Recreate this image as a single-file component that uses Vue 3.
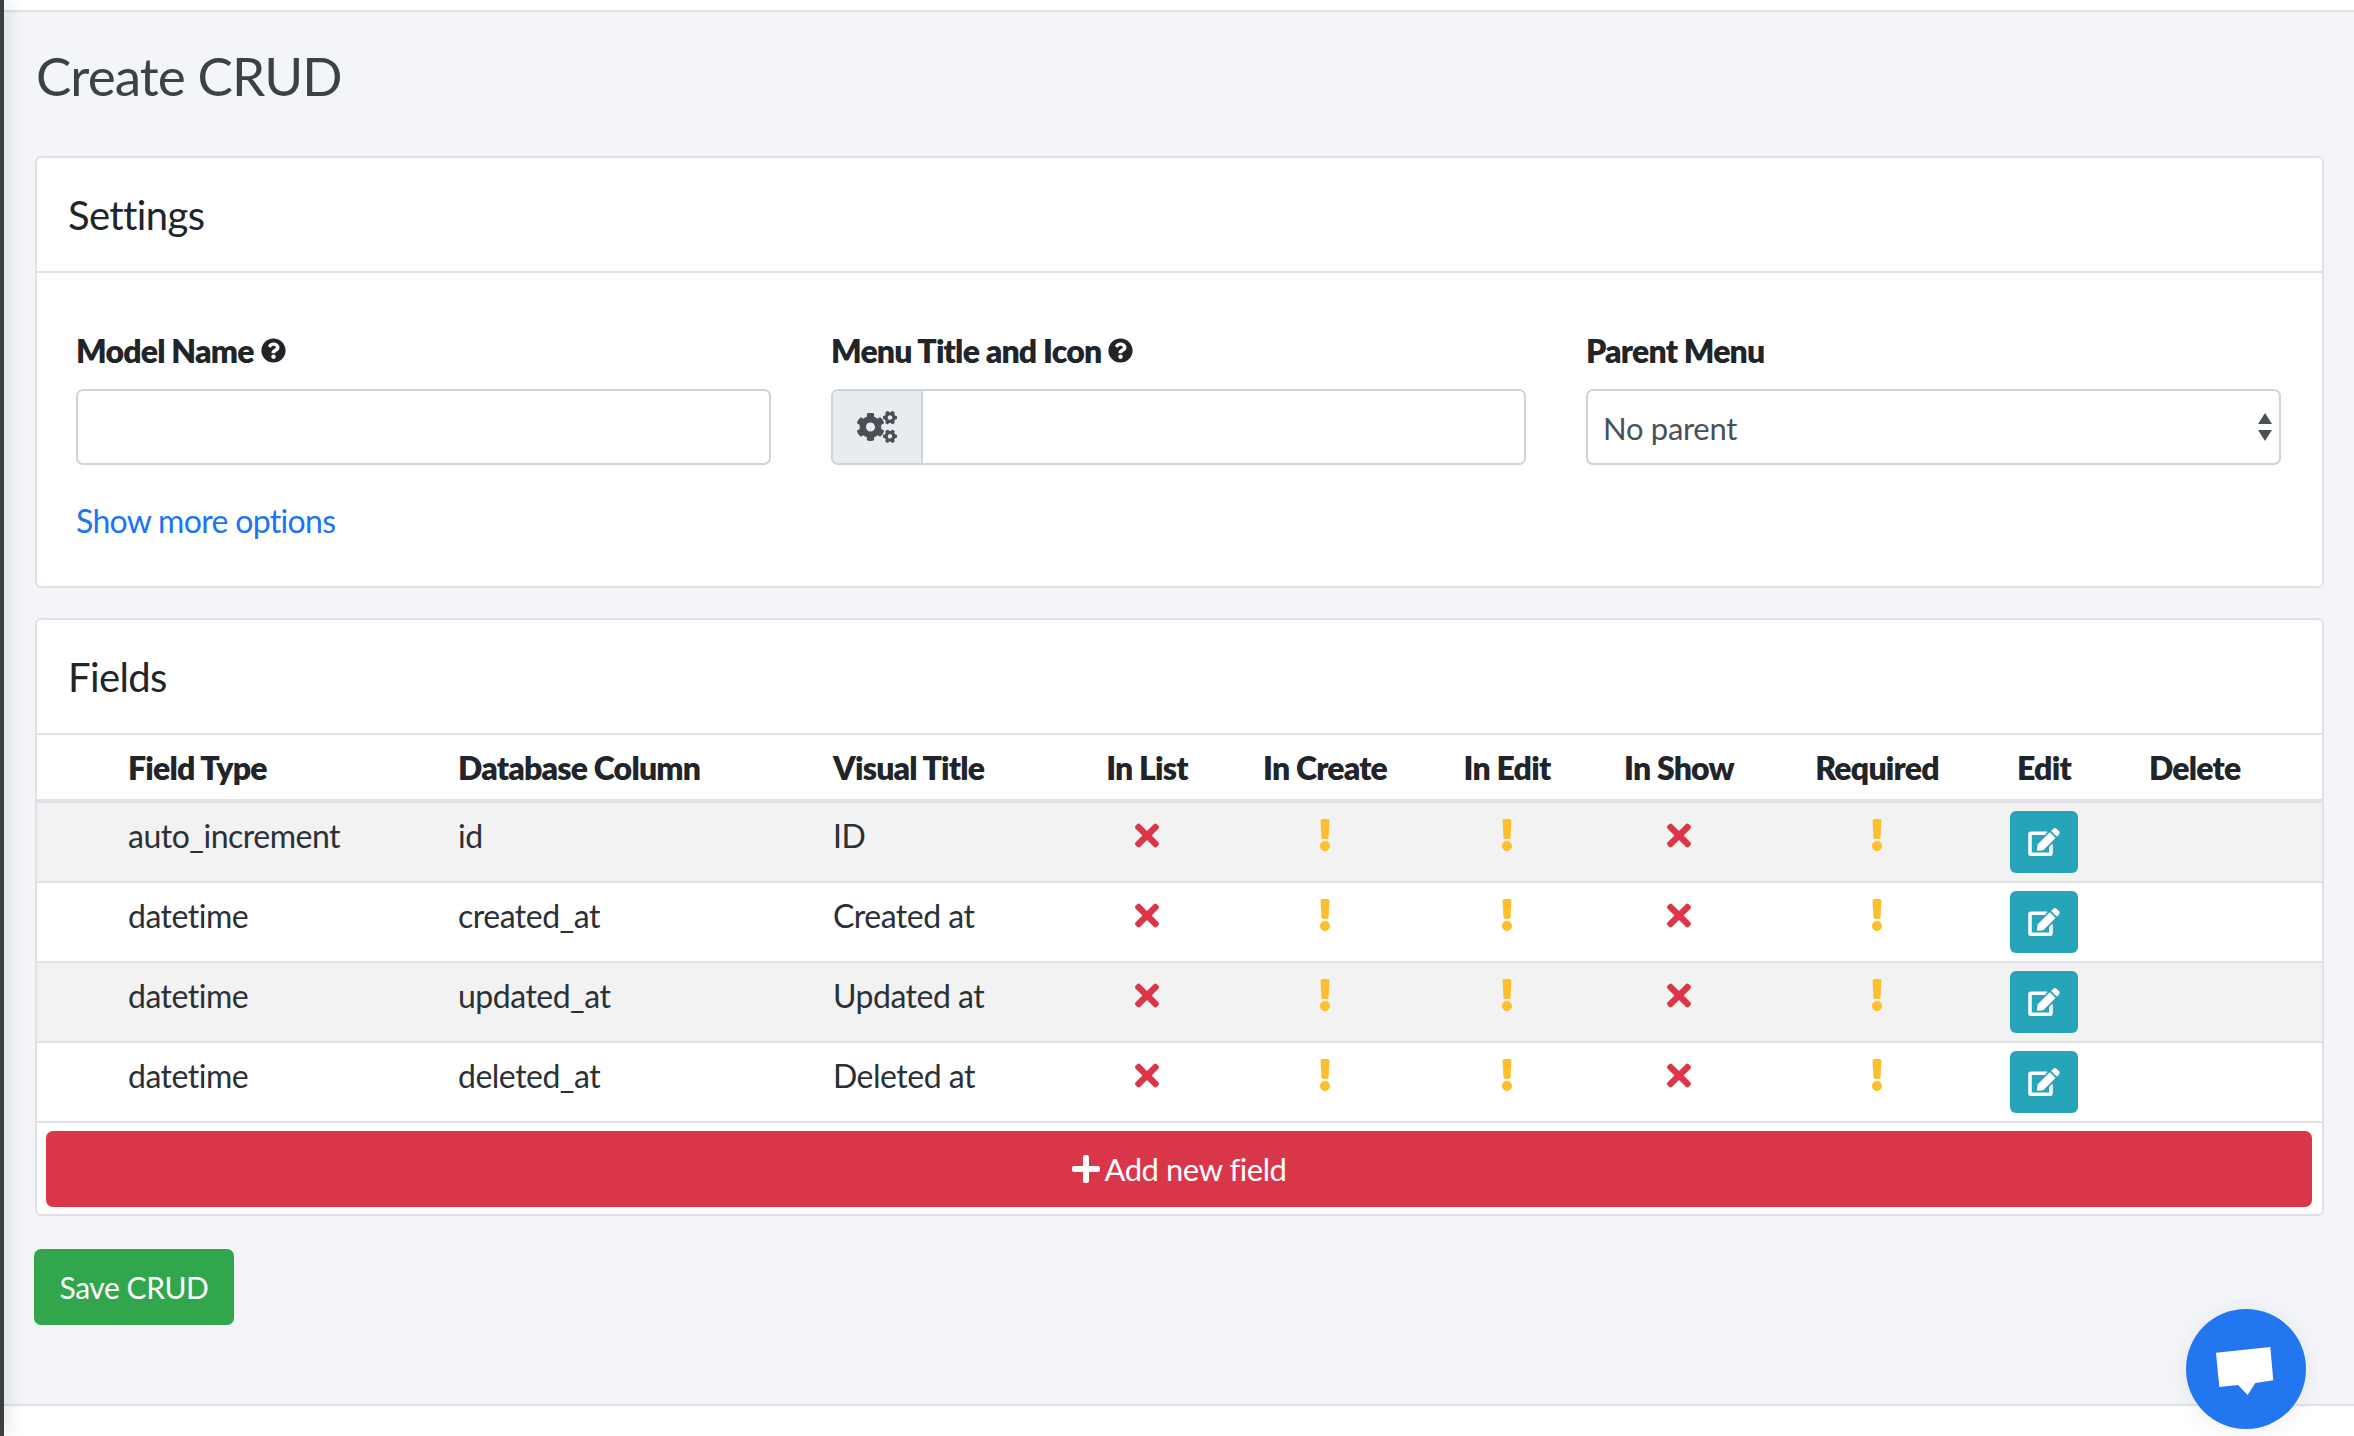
<script setup>
  const columns = [
    { label: "", kind: "blank" },
    { label: "Field Type", kind: "text" },
    { label: "Database Column", kind: "text" },
    { label: "Visual Title", kind: "text" },
    { label: "In List", kind: "mid" },
    { label: "In Create", kind: "mid" },
    { label: "In Edit", kind: "mid" },
    { label: "In Show", kind: "mid" },
    { label: "Required", kind: "mid" },
    { label: "Edit", kind: "mid" },
    { label: "Delete", kind: "last" },
  ];

  const fields = [
    { type: "auto_increment", column: "id", title: "ID" },
    { type: "datetime", column: "created_at", title: "Created at" },
    { type: "datetime", column: "updated_at", title: "Updated at" },
    { type: "datetime", column: "deleted_at", title: "Deleted at" },
  ];

  const questionPath = "M504 256c0 136.997-111.043 248-248 248S8 392.997 8 256C8 119.083 119.043 8 256 8s248 111.083 248 248zM262.655 90c-54.497 0-89.255 22.957-116.549 63.758-3.536 5.286-2.353 12.415 2.715 16.258l34.699 26.31c5.205 3.947 12.621 3.008 16.665-2.122 17.864-22.658 30.113-35.797 57.303-35.797 20.429 0 45.698 13.148 45.698 32.958 0 14.976-12.363 22.667-32.534 33.976C247.128 238.528 216 254.941 216 296v4c0 6.627 5.373 12 12 12h56c6.627 0 12-5.373 12-12v-1.333c0-28.462 83.186-29.647 83.186-106.667 0-58.002-60.165-102-116.531-102zM256 338c-25.365 0-46 20.635-46 46 0 25.364 20.635 46 46 46s46-20.636 46-46c0-25.365-20.635-46-46-46z";
  const cogsPath = "M512.1 191l-8.2 14.3c-3 5.3-9.4 7.5-15.1 5.4-11.8-4.4-22.6-10.7-32.1-18.6-4.6-3.8-5.8-10.5-2.8-15.7l8.2-14.3c-6.9-8-12.3-17.3-15.9-27.4h-16.5c-6 0-11.2-4.3-12.2-10.3-2-12-2.1-24.6 0-37.1 1-6 6.2-10.4 12.2-10.4h16.5c3.6-10.1 9-19.4 15.9-27.4l-8.2-14.3c-3-5.2-1.9-11.9 2.8-15.7 9.5-7.9 20.4-14.2 32.1-18.6 5.7-2.1 12.1.1 15.1 5.4l8.2 14.3c10.5-1.9 21.2-1.9 31.7 0L552 6.3c3-5.3 9.4-7.5 15.1-5.4 11.8 4.4 22.6 10.7 32.1 18.6 4.6 3.8 5.8 10.5 2.8 15.7l-8.2 14.3c6.9 8 12.3 17.3 15.9 27.4h16.5c6 0 11.2 4.3 12.2 10.3 2 12 2.1 24.6 0 37.1-1 6-6.2 10.4-12.2 10.4h-16.5c-3.6 10.1-9 19.4-15.9 27.4l8.2 14.3c3 5.2 1.9 11.9-2.8 15.7-9.5 7.9-20.4 14.2-32.1 18.6-5.7 2.1-12.1-.1-15.1-5.4l-8.2-14.3c-10.4 1.9-21.2 1.9-31.7 0zm-10.5-58.8c38.5 29.6 82.4-14.3 52.8-52.8-38.5-29.7-82.4 14.3-52.8 52.8zM386.3 286.1l33.7 16.8c10.1 5.8 14.5 18.1 10.5 29.1-8.9 24.2-26.4 46.4-42.6 65.8-7.4 8.9-20.2 11.1-30.3 5.3l-29.1-16.8c-16 13.7-34.6 24.6-54.9 31.7v33.6c0 11.6-8.3 21.6-19.7 23.6-24.6 4.2-50.4 4.4-75.9 0-11.5-2-20-11.9-20-23.6V418c-20.3-7.2-38.9-18-54.9-31.7L74 403c-10 5.8-22.9 3.6-30.3-5.3-16.2-19.4-33.3-41.6-42.2-65.7-4-10.9.4-23.2 10.5-29.1l33.3-16.8c-3.9-20.9-3.9-42.4 0-63.4L12 205.8c-10.1-5.8-14.6-18.1-10.5-29 8.9-24.2 26-46.4 42.2-65.8 7.4-8.9 20.2-11.1 30.3-5.3l29.1 16.8c16-13.7 34.6-24.6 54.9-31.7V57.1c0-11.5 8.2-21.5 19.6-23.5 24.6-4.2 50.5-4.4 76-.1 11.5 2 20 11.9 20 23.6v33.6c20.3 7.2 38.9 18 54.9 31.7l29.1-16.8c10-5.8 22.9-3.6 30.3 5.3 16.2 19.4 33.2 41.6 42.1 65.8 4 10.9.1 23.2-10 29.1l-33.7 16.8c3.9 21 3.9 42.5 0 63.5zm-117.6 21.1c59.2-77-28.7-164.9-105.7-105.7-59.2 77 28.7 164.9 105.7 105.7zm243.4 182.7l-8.2 14.3c-3 5.3-9.4 7.5-15.1 5.4-11.8-4.4-22.6-10.7-32.1-18.6-4.6-3.8-5.8-10.5-2.8-15.7l8.2-14.3c-6.9-8-12.3-17.3-15.9-27.4h-16.5c-6 0-11.2-4.3-12.2-10.3-2-12-2.1-24.6 0-37.1 1-6 6.2-10.4 12.2-10.4h16.5c3.6-10.1 9-19.4 15.9-27.4l-8.2-14.3c-3-5.2-1.9-11.9 2.8-15.7 9.5-7.9 20.4-14.2 32.1-18.6 5.7-2.1 12.1.1 15.1 5.4l8.2 14.3c10.5-1.9 21.2-1.9 31.7 0l8.2-14.3c3-5.3 9.4-7.5 15.1-5.4 11.8 4.4 22.6 10.7 32.1 18.6 4.6 3.8 5.8 10.5 2.8 15.7l-8.2 14.3c6.9 8 12.3 17.3 15.9 27.4h16.5c6 0 11.2 4.3 12.2 10.3 2 12 2.1 24.6 0 37.1-1 6-6.2 10.4-12.2 10.4h-16.5c-3.6 10.1-9 19.4-15.9 27.4l8.2 14.3c3 5.2 1.9 11.9-2.8 15.7-9.5 7.9-20.4 14.2-32.1 18.6-5.7 2.1-12.1-.1-15.1-5.4l-8.2-14.3c-10.4 1.9-21.2 1.9-31.7 0zM501.6 431c38.5 29.6 82.4-14.3 52.8-52.8-38.5-29.6-82.4 14.3-52.8 52.8z";
  const timesPath = "M242.72 256l100.07-100.07c12.28-12.28 12.28-32.19 0-44.48l-22.24-22.24c-12.28-12.28-32.19-12.28-44.48 0L176 189.28 75.93 89.21c-12.28-12.28-32.19-12.28-44.48 0L9.21 111.45c-12.28 12.28-12.28 32.19 0 44.48L109.28 256 9.21 356.07c-12.28 12.28-12.28 32.19 0 44.48l22.24 22.24c12.28 12.28 32.2 12.28 44.48 0L176 322.72l100.07 100.07c12.28 12.28 32.2 12.28 44.48 0l22.24-22.24c12.28-12.28 12.28-32.19 0-44.48L242.72 256z";
  const exclamationPath = "M176 432c0 44.112-35.888 80-80 80s-80-35.888-80-80 35.888-80 80-80 80 35.888 80 80zM25.26 25.199l13.6 272C39.499 309.972 50.041 320 62.83 320h66.34c12.789 0 23.331-10.028 23.97-22.801l13.6-272C167.425 11.49 156.496 0 142.77 0H49.23C35.504 0 24.575 11.49 25.26 25.199z";
  const editPath = "M402.6 83.2l90.2 90.2c3.8 3.8 3.8 10 0 13.8L274.4 405.6l-92.8 10.3c-12.4 1.4-22.9-9.1-21.5-21.5l10.3-92.8L388.8 83.2c3.8-3.8 10-3.8 13.8 0zm162-22.9l-48.8-48.8c-15.2-15.2-39.9-15.2-55.2 0l-35.4 35.4c-3.8 3.8-3.8 10 0 13.8l90.2 90.2c3.8 3.8 10 3.8 13.8 0l35.4-35.4c15.2-15.3 15.2-40 0-55.2zM384 346.2V448H64V128h229.8c3.2 0 6.2-1.3 8.5-3.5l40-40c7.6-7.6 2.2-20.5-8.5-20.5H48C21.5 64 0 85.5 0 112v352c0 26.5 21.5 48 48 48h352c26.5 0 48-21.5 48-48V306.2c0-10.7-12.9-16-20.5-8.5l-40 40c-2.2 2.3-3.5 5.3-3.5 8.5z";
  const plusPath = "M416 208H272V64c0-17.67-14.33-32-32-32h-32c-17.67 0-32 14.33-32 32v144H32c-17.67 0-32 14.33-32 32v32c0 17.67 14.33 32 32 32h144v144c0 17.67 14.33 32 32 32h32c17.67 0 32-14.33 32-32V304h144c17.67 0 32-14.33 32-32v-32c0-17.67-14.33-32-32-32z";
</script>

<template>
  <div class="page">
    <div class="sidebar"></div>
    <div class="wrapper">
      <div class="topbar"></div>
      <main class="content">
        <h2 class="page-title">Create CRUD</h2>

        <section class="card">
          <div class="card-header">Settings</div>
          <div class="card-body">
            <div class="form-grid">
              <div>
                <label class="form-label">
                  Model Name
                  <svg class="help-icon" viewBox="0 0 512 512"><path :d="questionPath" /></svg>
                </label>
                <input class="form-control" type="text" />
              </div>
              <div>
                <label class="form-label">
                  Menu Title and Icon
                  <svg class="help-icon" viewBox="0 0 512 512"><path :d="questionPath" /></svg>
                </label>
                <div class="input-group">
                  <span class="addon">
                    <svg class="cogs-icon" viewBox="0 0 640 512"><path :d="cogsPath" /></svg>
                  </span>
                  <input class="group-input" type="text" />
                </div>
              </div>
              <div>
                <label class="form-label">Parent Menu</label>
                <div class="select-wrap">
                  <select class="form-select">
                    <option>No parent</option>
                  </select>
                  <svg class="select-arrows" viewBox="0 0 14 28">
                    <path d="M7 0L14 11H0Z" />
                    <path d="M0 17H14L7 28Z" />
                  </svg>
                </div>
              </div>
            </div>
            <a class="more-link" href="#">Show more options</a>
          </div>
        </section>

        <section class="card fields-card">
          <div class="card-header">Fields</div>
          <table class="fields-table">
            <thead>
              <tr>
                <th v-for="col in columns" :key="col.label" :class="col.kind">{{col.label}}</th>
              </tr>
            </thead>
            <tbody>
              <tr v-for="field in fields" :key="field.column">
                <td></td>
                <td>{{field.type}}</td>
                <td>{{field.column}}</td>
                <td>{{field.title}}</td>
                <td class="mid">
                  <svg class="times-icon" viewBox="0 0 352 512"><path :d="timesPath" /></svg>
                </td>
                <td class="mid">
                  <svg class="warn-icon" viewBox="0 0 192 512"><path :d="exclamationPath" /></svg>
                </td>
                <td class="mid">
                  <svg class="warn-icon" viewBox="0 0 192 512"><path :d="exclamationPath" /></svg>
                </td>
                <td class="mid">
                  <svg class="times-icon" viewBox="0 0 352 512"><path :d="timesPath" /></svg>
                </td>
                <td class="mid">
                  <svg class="warn-icon" viewBox="0 0 192 512"><path :d="exclamationPath" /></svg>
                </td>
                <td class="mid edit-cell">
                  <button class="edit-btn" type="button">
                    <svg class="edit-icon" viewBox="0 0 576 512"><path :d="editPath" /></svg>
                  </button>
                </td>
                <td></td>
              </tr>
            </tbody>
          </table>
          <button class="add-btn" type="button">
            <svg class="plus-icon" viewBox="0 0 448 512"><path :d="plusPath" /></svg>
            <span>Add new field</span>
          </button>
        </section>

        <button class="save-btn" type="button">Save CRUD</button>
      </main>
      <footer class="footer"></footer>
    </div>

    <div class="chat-bubble">
      <svg viewBox="0 0 120 120" width="120" height="120">
        <path d="M30 43.7L84.3 38L87.3 71.3L69.3 74L61.7 86L52 76L33.3 78Z" fill="#fff" />
      </svg>
    </div>
  </div>
</template>

<style scoped>
  .page {
    display: flex;
    height: 1436px;
    overflow: hidden;
    position: relative;
    font-family: Lato, "Liberation Sans", sans-serif;
    font-size: 32px;
    color: #212529;
  }
  .sidebar {
    width: 4px;
    flex: none;
    background: #3a3f44;
    box-shadow: 2px 0 16px rgba(0, 0, 0, 0.28);
    z-index: 2;
  }
  .wrapper {
    flex: 1;
    display: flex;
    flex-direction: column;
    min-width: 0;
  }
  .topbar {
    height: 10px;
    flex: none;
    background: #fff;
    border-bottom: 2px solid #dfe3e7;
  }
  .content {
    flex: 1;
    background: #f4f5f8;
    padding: 34px 30px 0 31px;
  }
  .page-title {
    margin: 0 0 50px 1px;
    font-size: 53px;
    line-height: 60px;
    font-weight: 400;
    color: #3c4147;
    letter-spacing: -0.9px;
  }
  .card {
    background: #fff;
    border: 2px solid #dfe1e4;
    border-radius: 6px;
  }
  .card-header {
    display: flex;
    align-items: center;
    height: 113px;
    padding-left: 31px;
    font-size: 40px;
    letter-spacing: -0.6px;
    border-bottom: 2px solid #dfe1e4;
  }
  .card-body {
    padding: 57px 41px 45px 39px;
  }
  .form-grid {
    display: grid;
    grid-template-columns: repeat(3, 1fr);
    column-gap: 60px;
  }
  .form-label {
    display: flex;
    align-items: center;
    gap: 7px;
    height: 40px;
    margin-bottom: 19px;
    font-size: 32px;
    font-weight: 800;
    letter-spacing: -0.8px;
  }
  .help-icon {
    width: 25px;
    height: 25px;
    fill: #212529;
  }
  .form-control,
  .form-select {
    display: block;
    width: 100%;
    height: 76px;
    box-sizing: border-box;
    border: 2px solid #ced4da;
    border-radius: 7px;
    background: #fff;
    font-family: inherit;
    font-size: 31px;
    color: #495057;
    outline: none;
  }
  .input-group {
    display: flex;
    height: 76px;
    box-sizing: border-box;
    border: 2px solid #ced4da;
    border-radius: 7px;
    overflow: hidden;
  }
  .addon {
    width: 88px;
    flex: none;
    display: flex;
    align-items: center;
    justify-content: center;
    background: #e9ecef;
    border-right: 2px solid #ced4da;
  }
  .cogs-icon {
    width: 40px;
    height: 32px;
    fill: #495057;
  }
  .group-input {
    flex: 1;
    min-width: 0;
    border: none;
    outline: none;
  }
  .select-wrap {
    position: relative;
  }
  .form-select {
    appearance: none;
    padding: 1px 40px 0 15px;
    letter-spacing: -0.3px;
  }
  .select-arrows {
    position: absolute;
    right: 9px;
    top: 24px;
    width: 14px;
    height: 28px;
    fill: #495057;
  }
  .more-link {
    display: block;
    margin-top: 36px;
    line-height: 40px;
    font-size: 32px;
    letter-spacing: -0.68px;
    color: #1b74f8;
    text-decoration: none;
  }
  .fields-card {
    margin-top: 30px;
    padding-bottom: 7px;
  }
  .fields-table {
    width: 100%;
    table-layout: fixed;
    border-collapse: separate;
    border-spacing: 0;
  }
  .fields-table th {
    height: 68px;
    box-sizing: border-box;
    padding: 0 18px;
    text-align: left;
    font-size: 32px;
    font-weight: 800;
    letter-spacing: -0.8px;
    white-space: nowrap;
    border-bottom: 4px solid #dee2e6;
  }
  .fields-table th.mid {
    text-align: center;
    padding: 0;
  }
  .fields-table th.last {
    padding-left: 28px;
  }
  .fields-table th:nth-child(1) { width: 73px; }
  .fields-table th:nth-child(2) { width: 330px; }
  .fields-table th:nth-child(3) { width: 375px; }
  .fields-table th:nth-child(4) { width: 272px; }
  .fields-table th:nth-child(5) { width: 120px; }
  .fields-table th:nth-child(6) { width: 236px; }
  .fields-table th:nth-child(7) { width: 128px; }
  .fields-table th:nth-child(8) { width: 216px; }
  .fields-table th:nth-child(9) { width: 180px; }
  .fields-table th:nth-child(10) { width: 154px; }
  .fields-table td {
    height: 80px;
    box-sizing: border-box;
    padding: 15px 18px 0;
    vertical-align: top;
    line-height: 36px;
    font-size: 32px;
    letter-spacing: -0.5px;
    color: #2b3035;
    border-bottom: 2px solid #dee2e6;
  }
  .fields-table td.mid {
    padding: 16px 0 0;
  }
  .fields-table td.edit-cell {
    padding-top: 8px;
  }
  .fields-table tbody tr:nth-child(odd) td {
    background: #f2f2f2;
  }
  .times-icon {
    display: block;
    width: 24px;
    height: 35px;
    margin: -1px auto 0;
    fill: #dc3545;
  }
  .warn-icon {
    display: block;
    width: 12px;
    height: 32px;
    margin: 0 auto;
    fill: #fdbf2d;
  }
  .edit-btn {
    display: flex;
    align-items: center;
    justify-content: center;
    width: 68px;
    height: 62px;
    margin: 0 auto;
    padding: 0;
    border: none;
    border-radius: 6px;
    background: #26a4b9;
  }
  .edit-icon {
    width: 32px;
    height: 28px;
    fill: #fff;
  }
  .add-btn {
    display: flex;
    align-items: center;
    justify-content: center;
    gap: 5px;
    width: calc(100% - 19px);
    height: 76px;
    margin: 8px 10px 0 9px;
    padding: 0;
    border: none;
    border-radius: 7px;
    background: #da364a;
    color: #fff;
    font-family: inherit;
    font-size: 31px;
    letter-spacing: -0.45px;
  }
  .plus-icon {
    width: 28px;
    height: 32px;
    fill: #fff;
  }
  .save-btn {
    display: block;
    width: 200px;
    height: 76px;
    margin: 33px 0 0 -1px;
    padding: 0;
    border: none;
    border-radius: 7px;
    background: #31a64c;
    color: #fff;
    font-family: inherit;
    font-size: 30px;
    letter-spacing: -0.45px;
  }
  .footer {
    height: 30px;
    flex: none;
    background: #fff;
    border-top: 2px solid #dfe3e7;
  }
  .chat-bubble {
    position: absolute;
    left: 2186px;
    top: 1309px;
    width: 120px;
    height: 120px;
    border-radius: 50%;
    background: #2277f1;
    box-shadow: 0 2px 24px rgba(0, 0, 0, 0.07);
    z-index: 3;
  }
  .chat-bubble svg {
    display: block;
  }
</style>

<style>
  html, body {
    margin: 0;
    background: #fff;
  }
</style>
